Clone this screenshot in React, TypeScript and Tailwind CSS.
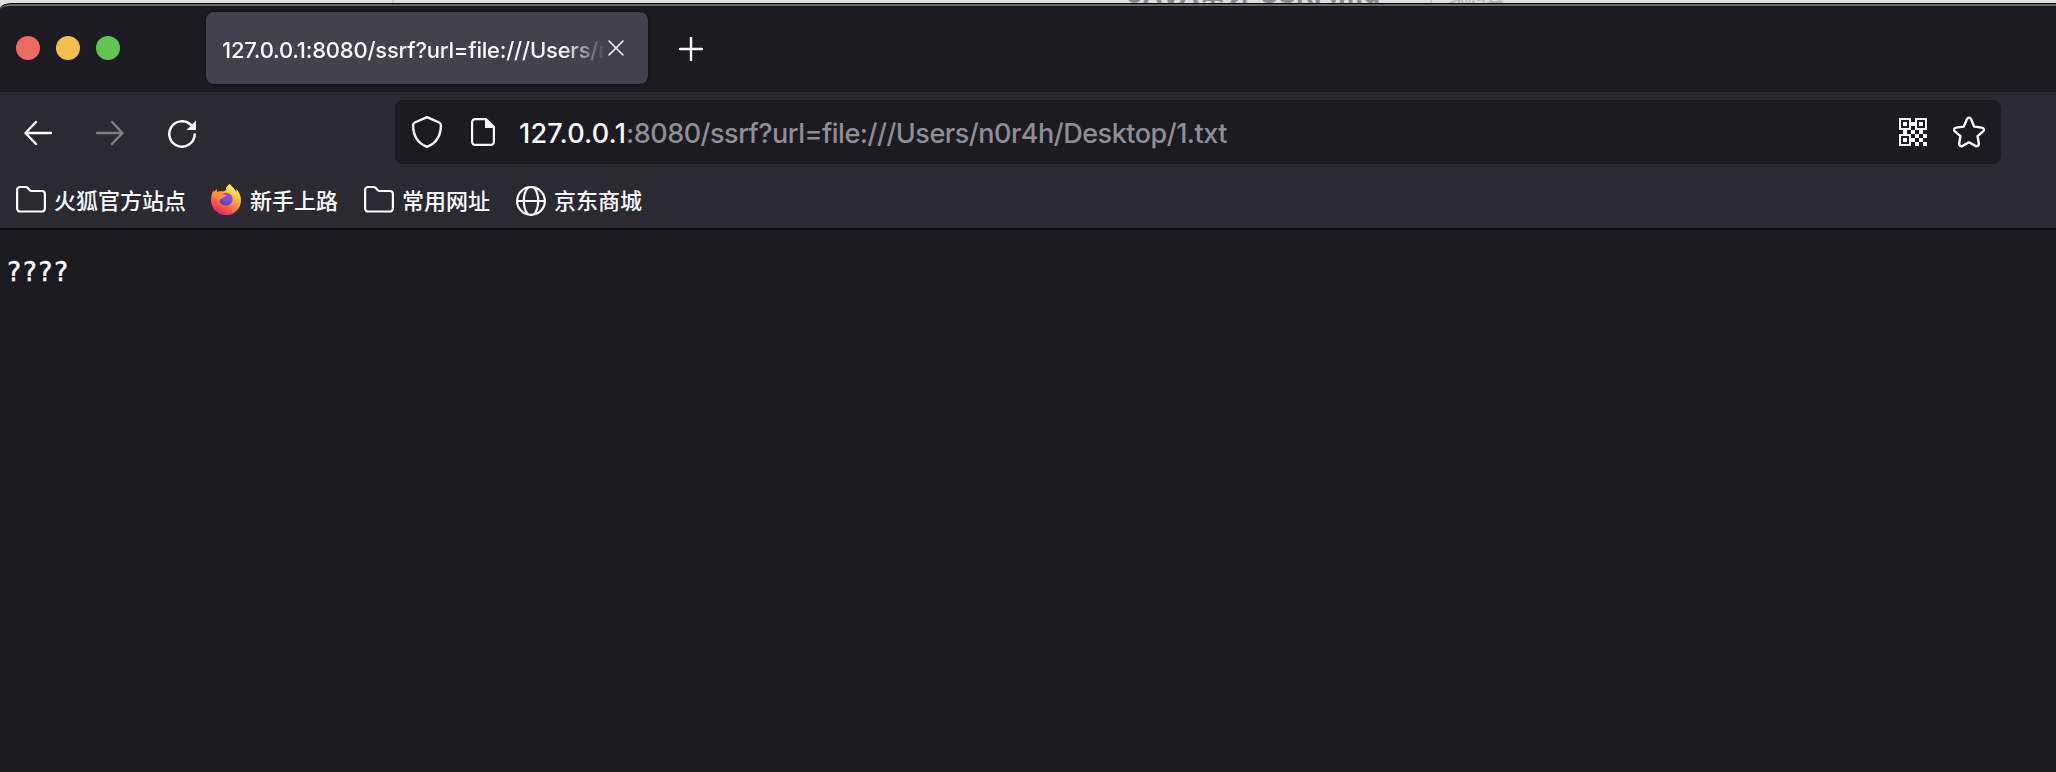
import type { ReactNode } from 'react';

const QR_ROWS = [
  '######..######',
  '#....#..#....#',
  '#.##.####.##.#',
  '#.##.####.##.#',
  '#....#..#....#',
  '######..######',
  '..##..##..##..',
  '..##..##..##..',
  '######..##..##',
  '#....#..##..##',
  '#.##.###..##..',
  '#.##.###..##..',
  '#....#..##..##',
  '######..##..##',
];

function FolderIcon() {
  return (
    <svg className="h-[30px] w-[30px]" viewBox="0 0 30 30" fill="none" stroke="#fbfbfe" strokeWidth="2.200" strokeLinejoin="round">
      <path d="M1.100 5a3 3 0 0 1 3-3h5.500c1 0 1.600.4 2.200 1l2 2.200c.5.500 1 .8 1.800.8h10.300a3 3 0 0 1 3 3v14.500a3 3 0 0 1-3 3H4.100a3 3 0 0 1-3-3z" />
    </svg>
  );
}

function GlobeIcon() {
  return (
    <svg className="mt-0.5 h-[30px] w-[30px]" viewBox="0 0 30 30" fill="none" stroke="#fbfbfe" strokeWidth="2.200">
      <circle cx="15" cy="15" r="13.900" />
      <path d="M1 15h28" />
      <path d="M12 1.500C9 5 7.800 10 7.800 15s1.200 10 4.200 13.500M18 1.500c3 3.500 4.200 8.500 4.200 13.500s-1.200 10-4.200 13.500" />
    </svg>
  );
}

function FirefoxIcon() {
  return (
    <svg className="-mt-0.5 -ml-0.5 h-8 w-8" viewBox="0 0 32 32">
      <defs>
        <linearGradient id="flame" x1="0.850" y1="0.100" x2="0.350" y2="1">
          <stop offset="0" stopColor="#fff44f" />
          <stop offset="0.300" stopColor="#ffbd3f" />
          <stop offset="0.600" stopColor="#ff7a3c" />
          <stop offset="0.820" stopColor="#f5484c" />
          <stop offset="1" stopColor="#d91e78" />
        </linearGradient>
        <linearGradient id="core" x1="0.700" y1="0" x2="0.400" y2="1">
          <stop offset="0" stopColor="#a644ee" />
          <stop offset="0.500" stopColor="#7a4fe0" />
          <stop offset="1" stopColor="#5046a8" />
        </linearGradient>
      </defs>
      <path fill="url(#flame)" d="M20 1c1 2.500 4.500 4 6 8l.5-3c3 4 4.500 7 4.500 11a15 15 0 0 1-30 .5C1 13 2 9.500 3.500 7.500L4 9.200 6.600 6l.6 3C9 8 11 8 13 8.500c2-.5 3-1 3-2.500 0-2 2-4 4-5z" />
      <circle cx="16" cy="16.200" r="6.500" fill="url(#core)" />
      <path fill="#ff9138" d="M3.500 10L6.600 6.500l.6 2.700c2-.8 3.800-.4 4.800.8 1.500 1.200 3 1.600 4.800 2-.5 1.800-3.500 2-4.800 3.200-1.200.6-2 1-2.500 2L5 15z" />
      <path fill="#ffe34a" d="M20 1c1 2.500 4.500 4 6 8 .8 2.500.5 5-.5 7-.2-3-1.500-5.500-5-7.500-1.300-.8-3-1.500-4.500-2.500 0-2 2-4 4-5z" />
    </svg>
  );
}

function Bookmark({ icon, label }: { icon: ReactNode; label: string }) {
  return (
    <div className="flex items-center gap-2">
      {icon}
      <span className="pt-0.5 text-[22px] leading-8 font-medium">{label}</span>
    </div>
  );
}

export default function App() {
  return (
    <div className="h-[772px] w-[2056px] overflow-hidden bg-[#dedede] font-['Inter','Noto_Sans_CJK_SC',sans-serif] text-[#fbfbfe]">
      <div className="relative h-[3px] bg-[#dedede] text-[#8a8a8a]">
        <div className="absolute left-[392px] h-full w-0.5 bg-[#cccccc]" />
        <span className="absolute -top-[22px] left-[1127px] text-[27px] leading-8 font-bold tracking-[0.2px] whitespace-nowrap">JAVA审计 SSRF.md</span>
        <div className="absolute left-[1430px] h-full w-0.5 bg-[#c4c4c4]" />
        <span className="absolute -top-[22px] left-[1448px] text-[28px] leading-8 whitespace-nowrap text-[#b5b5b5]">编辑</span>
      </div>

      <div className="relative flex h-[769px] flex-col overflow-hidden rounded-tl-[12px_6px] border-t border-black bg-[#1c1b22]">
        <div className="flex h-[88px] shrink-0 rounded-tl-[12px_5px] border-t-2 border-[#656667] pl-4">
          <div className="flex gap-4 pt-[30px]">
            <div className="size-6 rounded-full bg-[#ed6a5e]" />
            <div className="size-6 rounded-full bg-[#f5bf4f]" />
            <div className="size-6 rounded-full bg-[#61c554]" />
          </div>
          <div className="mt-1.5 ml-[86px] flex h-[72px] w-[442px] items-center rounded-lg bg-[#42414d] pl-4 shadow-[0_0_4px_rgba(0,0,0,0.5)]">
            <div className="mt-1 w-[384px] overflow-hidden mask-[linear-gradient(to_right,black_340px,transparent_384px)] text-[22px] leading-8 font-medium tracking-[-0.22px] whitespace-nowrap">
              127.0.0.1:8080/ssrf?url=file:///Users/n0r4h
            </div>
            <svg className="ml-0.5 size-4" viewBox="0 0 16 16" stroke="#fbfbfe" strokeWidth="1.600" strokeLinecap="round">
              <path d="M1 1l14 14M15 1L1 15" />
            </svg>
          </div>
          <svg className="mt-[31px] ml-[31px] size-6" viewBox="0 0 24 24" stroke="#fbfbfe" strokeWidth="2.400" strokeLinecap="round">
            <path d="M12 1v22M1 12h22" />
          </svg>
        </div>

        <div className="flex h-[136px] shrink-0 flex-col bg-[#2b2a33]">
          <div className="flex h-20 items-center pl-6">
            <svg className="mt-0.5 size-7" viewBox="0 0 28 28" fill="none" stroke="#fbfbfe" strokeWidth="2.400" strokeLinecap="round" strokeLinejoin="round">
              <path d="M27 14H1.500M12 3L1.500 14 12 25" />
            </svg>
            <svg className="mt-0.5 ml-11 size-7" viewBox="0 0 28 28" fill="none" stroke="#807f85" strokeWidth="2.400" strokeLinecap="round" strokeLinejoin="round">
              <path d="M1 14h25.500M16 3l10.500 11L16 25" />
            </svg>
            <svg className="mt-1 ml-11 size-7" viewBox="0 0 28 28" fill="none">
              <path d="M26.700 14.500A12.700 12.700 0 1 1 23 5" stroke="#fbfbfe" strokeWidth="2.500" strokeLinecap="round" />
              <path d="M28 .5V10h-9.500z" fill="#fbfbfe" />
            </svg>
            <div className="ml-[199px] flex h-16 w-[1606px] items-center rounded-lg bg-[#1c1b22] pl-4">
              <svg className="h-8 w-8" viewBox="0 0 32 32" fill="none" stroke="#fbfbfe" strokeWidth="2.400" strokeLinejoin="round">
                <path d="M16 1.200l12.200 5.300c1.200.5 1.700 1.300 1.700 2.500 0 11-5 18.500-13.900 21.800C7.100 27.500 2.100 20 2.100 9c0-1.200.5-2 1.700-2.500z" />
              </svg>
              <svg className="ml-7 h-7 w-6" viewBox="0 0 24 28" fill="none">
                <path d="M15 1.100H4.100a3 3 0 0 0-3 3v19.800a3 3 0 0 0 3 3h15.800a3 3 0 0 0 3-3V9.500" stroke="#fbfbfe" strokeWidth="2.200" />
                <path d="M14 0h1.500L24 8.500V10H14z" fill="#fbfbfe" />
              </svg>
              <span className="ml-6 flex-1 pt-[3px] text-[27px] leading-8 font-medium tracking-[-0.5px] whitespace-nowrap text-[#8f8e94]">
                <span className="tracking-[0.2px] text-[#fbfbfe]">127.0.0.1</span>:8080/ssrf?url=file:///Users/n0r4h/Desktop/1.txt
              </span>
              <svg className="mr-[26px] size-7" viewBox="0 0 14 14" fill="#fbfbfe" shapeRendering="crispEdges">
                {QR_ROWS.map((row, y) =>
                  row.split('').map((cell, x) => cell === '#' && <rect key={`${x}-${y}`} x={x} y={y} width="1" height="1" />)
                )}
              </svg>
              <svg className="mr-4 size-8" viewBox="0 0 32 32" fill="none" stroke="#fbfbfe" strokeWidth="2.400" strokeLinejoin="round">
                <path d="M14 3c.8-1.900 3.200-1.900 4 0l3.200 7.600 7.600 1c2.200.3 2.800 2.400 1.300 3.800l-5.500 4.800 1.200 7.300c.3 2-1.600 3.400-3.400 2.400L16 26.300l-6.400 3.600c-1.800 1-3.700-.4-3.400-2.400l1.200-7.300-5.500-4.800c-1.500-1.400-.9-3.500 1.300-3.800l7.600-1z" />
              </svg>
            </div>
          </div>
          <div className="flex h-14 items-center gap-[26px] pl-4">
            <Bookmark icon={<FolderIcon />} label="火狐官方站点" />
            <Bookmark icon={<FirefoxIcon />} label="新手上路" />
            <Bookmark icon={<FolderIcon />} label="常用网址" />
            <Bookmark icon={<GlobeIcon />} label="京东商城" />
          </div>
        </div>

        <div className="flex-1 border-t-2 border-[#0c0c0d] bg-[#1c1b22] px-1.5 pt-[26px]">
          <pre className="font-['DejaVu_Sans_Mono',monospace] text-[26px] leading-8 [-webkit-text-stroke:0.5px_#fbfbfe]">????</pre>
        </div>
      </div>
    </div>
  );
}
